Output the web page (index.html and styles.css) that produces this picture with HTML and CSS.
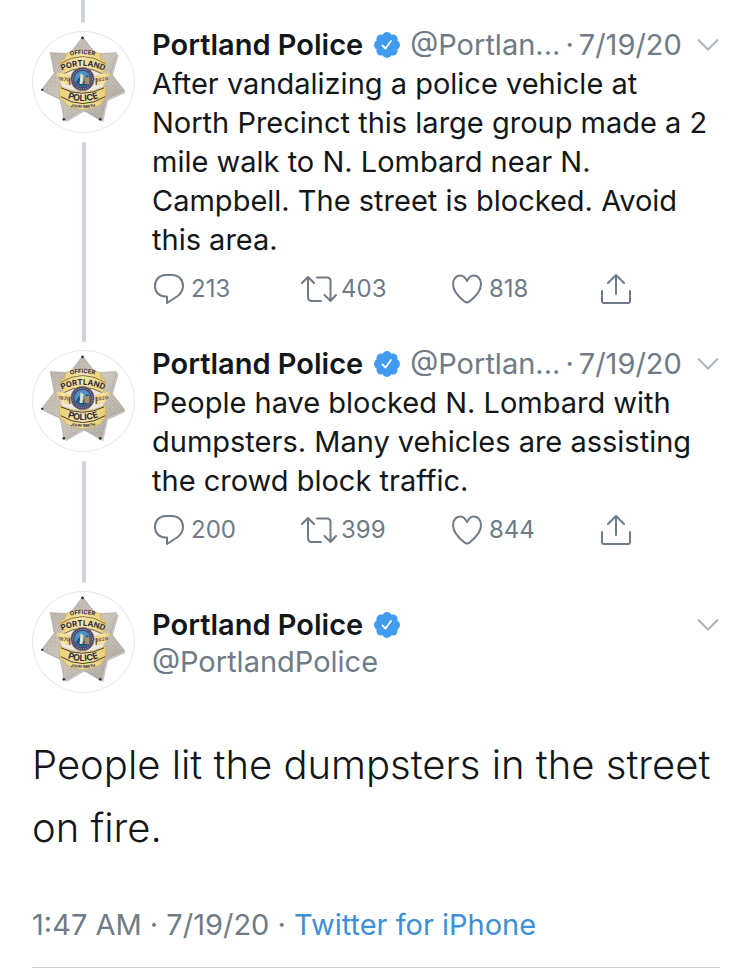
FILE: index.html
```html
<!DOCTYPE html>
<html lang="en">
<head>
    <meta charset="UTF-8">
    <meta name="viewport" content="width=device-width, initial-scale=1">
    <title>Portland Police</title>
    <link rel="stylesheet" href="styles.css">
</head>
<body>
    <!-- shared icons -->
    <svg class="sprite" aria-hidden="true">
        <defs>
            <linearGradient id="silver" x1="0" y1="0" x2="1" y2="1">
                <stop offset="0" stop-color="#aaa59c" />
                <stop offset="0.5" stop-color="#c9c3ba" />
                <stop offset="1" stop-color="#a09a91" />
            </linearGradient>
            <pattern id="grain" width="4" height="4" patternUnits="userSpaceOnUse">
                <path d="M0 1h1M2 0h1M3 3h1M1 2h1" stroke="#efe9e0" stroke-width="1" />
                <path d="M2 2h1M0 3h1" stroke="#918c86" stroke-width="1" opacity="0.6" />
            </pattern>
            <linearGradient id="gold" x1="0" y1="0" x2="1" y2="0">
                <stop offset="0" stop-color="#ead078" />
                <stop offset="0.5" stop-color="#f5e5a4" />
                <stop offset="1" stop-color="#e8cd72" />
            </linearGradient>
            <path id="arcOfficer" d="M30 27Q50 18 70 27" />
            <path id="arcPortland" d="M26 41Q50 28 75 41" />
            <path id="arcPolice" d="M26 63Q50 78 75 63" />
            <path id="arcJohn" d="M30 74Q50 81 71 74" />
        </defs>
        <symbol id="badge" viewBox="0 0 102 102">
            <path d="M52 7L65 24L87 23L81 44L94 62L76 70L71 92L52 81L33 92L29 70L10 61L24 43Z" fill="#8b8883" opacity="0.5" />
            <path d="M50 5L63 22L85 21L79 42L93 60L74 68L69 90L50 79L31 90L27 68L8 59L21 42L17 21L37 22Z" fill="url(#silver)" />
            <path d="M50 5L63 22L85 21L79 42L93 60L74 68L69 90L50 79L31 90L27 68L8 59L21 42L17 21L37 22Z" fill="url(#grain)" stroke="#99948d" stroke-width="0.6" opacity="0.6" />
            <circle cx="50" cy="6" r="1.4" fill="#333" />
            <circle cx="9" cy="59" r="1.2" fill="#333" />
            <circle cx="31" cy="89" r="1.4" fill="#333" />
            <circle cx="68" cy="89" r="1.4" fill="#333" />
            <circle cx="50" cy="49" r="22" fill="#eee8e4" />
            <path d="M33 22Q50 14 68 22L69 28Q72 27 74 31L71 43Q50 31 30 43L27 31Q29 27 32 28Z" fill="url(#gold)" stroke="#c9ac55" stroke-width="0.6" />
            <path d="M28 32Q50 18 73 32M30 43Q50 31 71 43" fill="none" stroke="#6b5632" stroke-width="0.8" />
            <path d="M23 42Q31 41 38 45L38 54Q31 55 27 51Z" fill="url(#gold)" />
            <path d="M78 42Q70 41 63 45L63 54Q70 55 74 51Z" fill="url(#gold)" />
            <path d="M37 47V54M64 47V54" stroke="#3d3349" stroke-width="1" />
            <path d="M26 55Q50 67 74 55L73 69Q70 69 69 74Q50 84 33 74Q32 69 27 69Z" fill="url(#gold)" stroke="#c9ac55" stroke-width="0.6" />
            <path d="M28 57Q50 68 72 57M28 66Q50 80 73 66" fill="none" stroke="#33291f" stroke-width="0.9" />
            <circle cx="50" cy="48" r="12" fill="#453f70" stroke="#9d8c68" stroke-width="0.8" />
            <circle cx="50" cy="48" r="10" fill="none" stroke="#c4b6a5" stroke-width="1" stroke-dasharray="1 1" />
            <circle cx="50" cy="48" r="8.4" fill="#4a91c4" />
            <path d="M43 51L47 46L51 51L54 44L58 46L57 52Q51 59 44 53Z" fill="#245479" />
            <path d="M52 46H57V53H52Z" fill="#b08d50" />
            <path d="M48 42L51 44L50 53H47Z" fill="#e0e0cf" />
        </symbol>
        <symbol id="verified" viewBox="0 0 26 26">
            <g fill="#419bf0">
                <circle cx="13" cy="13" r="10" />
                <circle cx="13" cy="4.800" r="4.800" />
                <circle cx="18.800" cy="7.200" r="4.800" />
                <circle cx="21.200" cy="13" r="4.800" />
                <circle cx="18.800" cy="18.800" r="4.800" />
                <circle cx="13" cy="21.200" r="4.800" />
                <circle cx="7.200" cy="18.800" r="4.800" />
                <circle cx="4.800" cy="13" r="4.800" />
                <circle cx="7.200" cy="7.200" r="4.800" />
            </g>
            <path d="M8.500 13.500L11.500 16.500L17 9" fill="none" stroke="#fff" stroke-width="1.800" stroke-linecap="round" stroke-linejoin="round" />
        </symbol>
        <symbol id="chevron" viewBox="0 0 24 14">
            <path d="M2 1.500L12 11.500L22 1.500" fill="none" stroke="#aab4bd" stroke-width="2" />
        </symbol>
        <symbol id="reply" viewBox="0 0 30 30">
            <path d="M12 1H18C25 1 29 6 29 12C29 17 26.500 20 23 22.500L13 29V22.500H12C5 22.500 1 18 1 12C1 6 5 1 12 1Z" />
        </symbol>
        <symbol id="retweet" viewBox="0 0 36 30">
            <path d="M1 9L7 3L13 9M7 4V23Q7 27 11 27H20M16 3.500H26Q29.500 3.500 29.500 7V26M23.500 21L29.500 27L35 21" />
        </symbol>
        <symbol id="heart" viewBox="0 0 30 30">
            <path d="M15 7C13 3 11 1.500 8.500 1.500C4.500 1.500 1 4.500 1 10C1 17 8 24 12.500 27.500Q15 29.500 17.500 27.500C22 24 29 17 29 10C29 4.500 25.500 1.500 21.500 1.500C19 1.500 17 3 15 7Z" />
        </symbol>
        <symbol id="share" viewBox="0 0 30 30">
            <path d="M1 17V27Q1 29 3 29H27Q29 29 29 27V17M15 20V1M7 9L15 1L23 9" />
        </symbol>
    </svg>

    <main class="thread">
        <div class="line stub"></div>

        <article class="tweet">
            <div class="rail">
                <svg class="avatar" viewBox="0 0 102 102">
                    <use href="#badge" />
                    <text font-size="6"><textPath href="#arcOfficer" startOffset="50%">OFFICER</textPath></text>
                    <text font-size="8"><textPath href="#arcPortland" startOffset="50%">PORTLAND</textPath></text>
                    <text class="year" x="31" y="50" transform="rotate(8 31 50)">1870</text>
                    <text class="year" x="70" y="50" transform="rotate(-10 70 50)">2020</text>
                    <text font-size="9"><textPath href="#arcPolice" startOffset="50%">POLICE</textPath></text>
                    <text font-size="4"><textPath href="#arcJohn" startOffset="50%">JOHN SMITH</textPath></text>
                </svg>
                <div class="line"></div>
            </div>
            <div class="body">
                <header class="head">
                    <span class="name">Portland Police</span>
                    <svg class="verified"><use href="#verified" /></svg>
                    <span class="handle">@Portlan...</span>
                    <span class="dot">·</span>
                    <span class="date">7/19/20</span>
                    <button class="more" aria-label="More"><svg><use href="#chevron" /></svg></button>
                </header>
                <p class="text">After vandalizing a police vehicle at North Precinct this large group made a 2 mile walk to N. Lombard near N. Campbell. The street is blocked. Avoid this area.</p>
                <div class="actions">
                    <button aria-label="Reply"><svg class="icon"><use href="#reply" /></svg>213</button>
                    <button aria-label="Retweet"><svg class="icon wide"><use href="#retweet" /></svg>403</button>
                    <button aria-label="Like"><svg class="icon"><use href="#heart" /></svg>818</button>
                    <button aria-label="Share"><svg class="icon"><use href="#share" /></svg></button>
                </div>
            </div>
        </article>

        <article class="tweet">
            <div class="rail">
                <svg class="avatar" viewBox="0 0 102 102">
                    <use href="#badge" />
                    <text font-size="6"><textPath href="#arcOfficer" startOffset="50%">OFFICER</textPath></text>
                    <text font-size="8"><textPath href="#arcPortland" startOffset="50%">PORTLAND</textPath></text>
                    <text class="year" x="31" y="50" transform="rotate(8 31 50)">1870</text>
                    <text class="year" x="70" y="50" transform="rotate(-10 70 50)">2020</text>
                    <text font-size="9"><textPath href="#arcPolice" startOffset="50%">POLICE</textPath></text>
                    <text font-size="4"><textPath href="#arcJohn" startOffset="50%">JOHN SMITH</textPath></text>
                </svg>
                <div class="line"></div>
            </div>
            <div class="body">
                <header class="head">
                    <span class="name">Portland Police</span>
                    <svg class="verified"><use href="#verified" /></svg>
                    <span class="handle">@Portlan...</span>
                    <span class="dot">·</span>
                    <span class="date">7/19/20</span>
                    <button class="more" aria-label="More"><svg><use href="#chevron" /></svg></button>
                </header>
                <p class="text">People have blocked N. Lombard with dumpsters. Many vehicles are assisting the crowd block traffic.</p>
                <div class="actions">
                    <button aria-label="Reply"><svg class="icon"><use href="#reply" /></svg>200</button>
                    <button aria-label="Retweet"><svg class="icon wide"><use href="#retweet" /></svg>399</button>
                    <button aria-label="Like"><svg class="icon"><use href="#heart" /></svg>844</button>
                    <button aria-label="Share"><svg class="icon"><use href="#share" /></svg></button>
                </div>
            </div>
        </article>

        <article class="focus">
            <div class="tweet">
                <div class="rail">
                    <svg class="avatar" viewBox="0 0 102 102">
                        <use href="#badge" />
                        <text font-size="6"><textPath href="#arcOfficer" startOffset="50%">OFFICER</textPath></text>
                        <text font-size="8"><textPath href="#arcPortland" startOffset="50%">PORTLAND</textPath></text>
                        <text class="year" x="31" y="50" transform="rotate(8 31 50)">1870</text>
                        <text class="year" x="70" y="50" transform="rotate(-10 70 50)">2020</text>
                        <text font-size="9"><textPath href="#arcPolice" startOffset="50%">POLICE</textPath></text>
                        <text font-size="4"><textPath href="#arcJohn" startOffset="50%">JOHN SMITH</textPath></text>
                    </svg>
                </div>
                <div class="body author">
                    <header class="head">
                        <span class="name">Portland Police</span>
                        <svg class="verified"><use href="#verified" /></svg>
                        <button class="more" aria-label="More"><svg><use href="#chevron" /></svg></button>
                    </header>
                    <span class="handle">@PortlandPolice</span>
                </div>
            </div>
            <p class="big">People lit the dumpsters in the street on fire.</p>
            <p class="meta">1:47 AM · 7/19/20 · <a href="#">Twitter for iPhone</a></p>
        </article>
    </main>
</body>
</html>
```
FILE: styles.css
```css
* {
    margin: 0;
    padding: 0;
    box-sizing: border-box;
}
body {
    background: #fff;
    color: #14171a;
    font-family: Inter, "Liberation Sans", sans-serif;
    font-size: 29px;
    line-height: 39px;
}
button {
    border: 0;
    background: none;
    color: inherit;
    font: inherit;
    cursor: pointer;
}
.sprite {
    position: absolute;
    width: 0;
    height: 0;
}
.thread {
    padding: 0 30px 0 32px;
}
.line {
    flex: 1;
    width: 4px;
    margin-top: 9px;
    border-radius: 2px;
    background: #cbd4da;
}
.stub {
    height: 23px;
    margin: 0 49px;
    border-radius: 0 0 2px 2px;
}
.tweet {
    display: flex;
    gap: 17px;
}
.rail {
    display: flex;
    flex-direction: column;
    align-items: center;
    flex: none;
    padding-top: 8px;
}
.avatar {
    display: block;
    width: 103px;
    height: 102px;
    border: 1px solid #e6e8ea;
    border-radius: 50%;
    fill: #2f2747;
    font-weight: 700;
    text-anchor: middle;
}
.year {
    fill: #6e4c42;
    font-size: 5px;
}
.body {
    flex: 1;
    min-width: 0;
    padding: 2px 0 35px;
}
.head {
    display: flex;
    align-items: center;
}
.name {
    font-weight: 600;
}
.verified {
    flex: none;
    width: 26px;
    height: 26px;
    margin: 0 10px 0 11px;
}
.handle,
.dot,
.date {
    color: #6f7b86;
}
.dot {
    margin: 0 5px;
}
.more {
    display: flex;
    margin-left: auto;
}
.more svg {
    width: 24px;
    height: 14px;
}
.actions {
    display: grid;
    grid-template-columns: 1fr 1fr 1fr 121px;
    margin-top: 12px;
    color: #6f7b86;
    font-size: 24px;
    line-height: 36px;
}
.actions button {
    display: flex;
    align-items: center;
}
.icon {
    width: 30px;
    height: 30px;
    margin: 0 7px 0 2px;
    overflow: visible;
    fill: none;
    stroke: #6f7b86;
    stroke-width: 2;
    stroke-linecap: round;
    stroke-linejoin: round;
}
.wide {
    width: 36px;
    margin: 0 4px 0 0;
}
.author {
    padding: 22px 0 0;
}
.author .handle {
    display: block;
    line-height: 35px;
}
.big {
    margin-top: 40px;
    font-size: 40px;
    font-weight: 300;
    line-height: 63px;
}
.meta {
    padding: 46px 0 23px;
    border-bottom: 1px solid #ccd0d3;
    color: #6f7b86;
}
.meta a {
    color: #3d8fd6;
    text-decoration: none;
}
```
